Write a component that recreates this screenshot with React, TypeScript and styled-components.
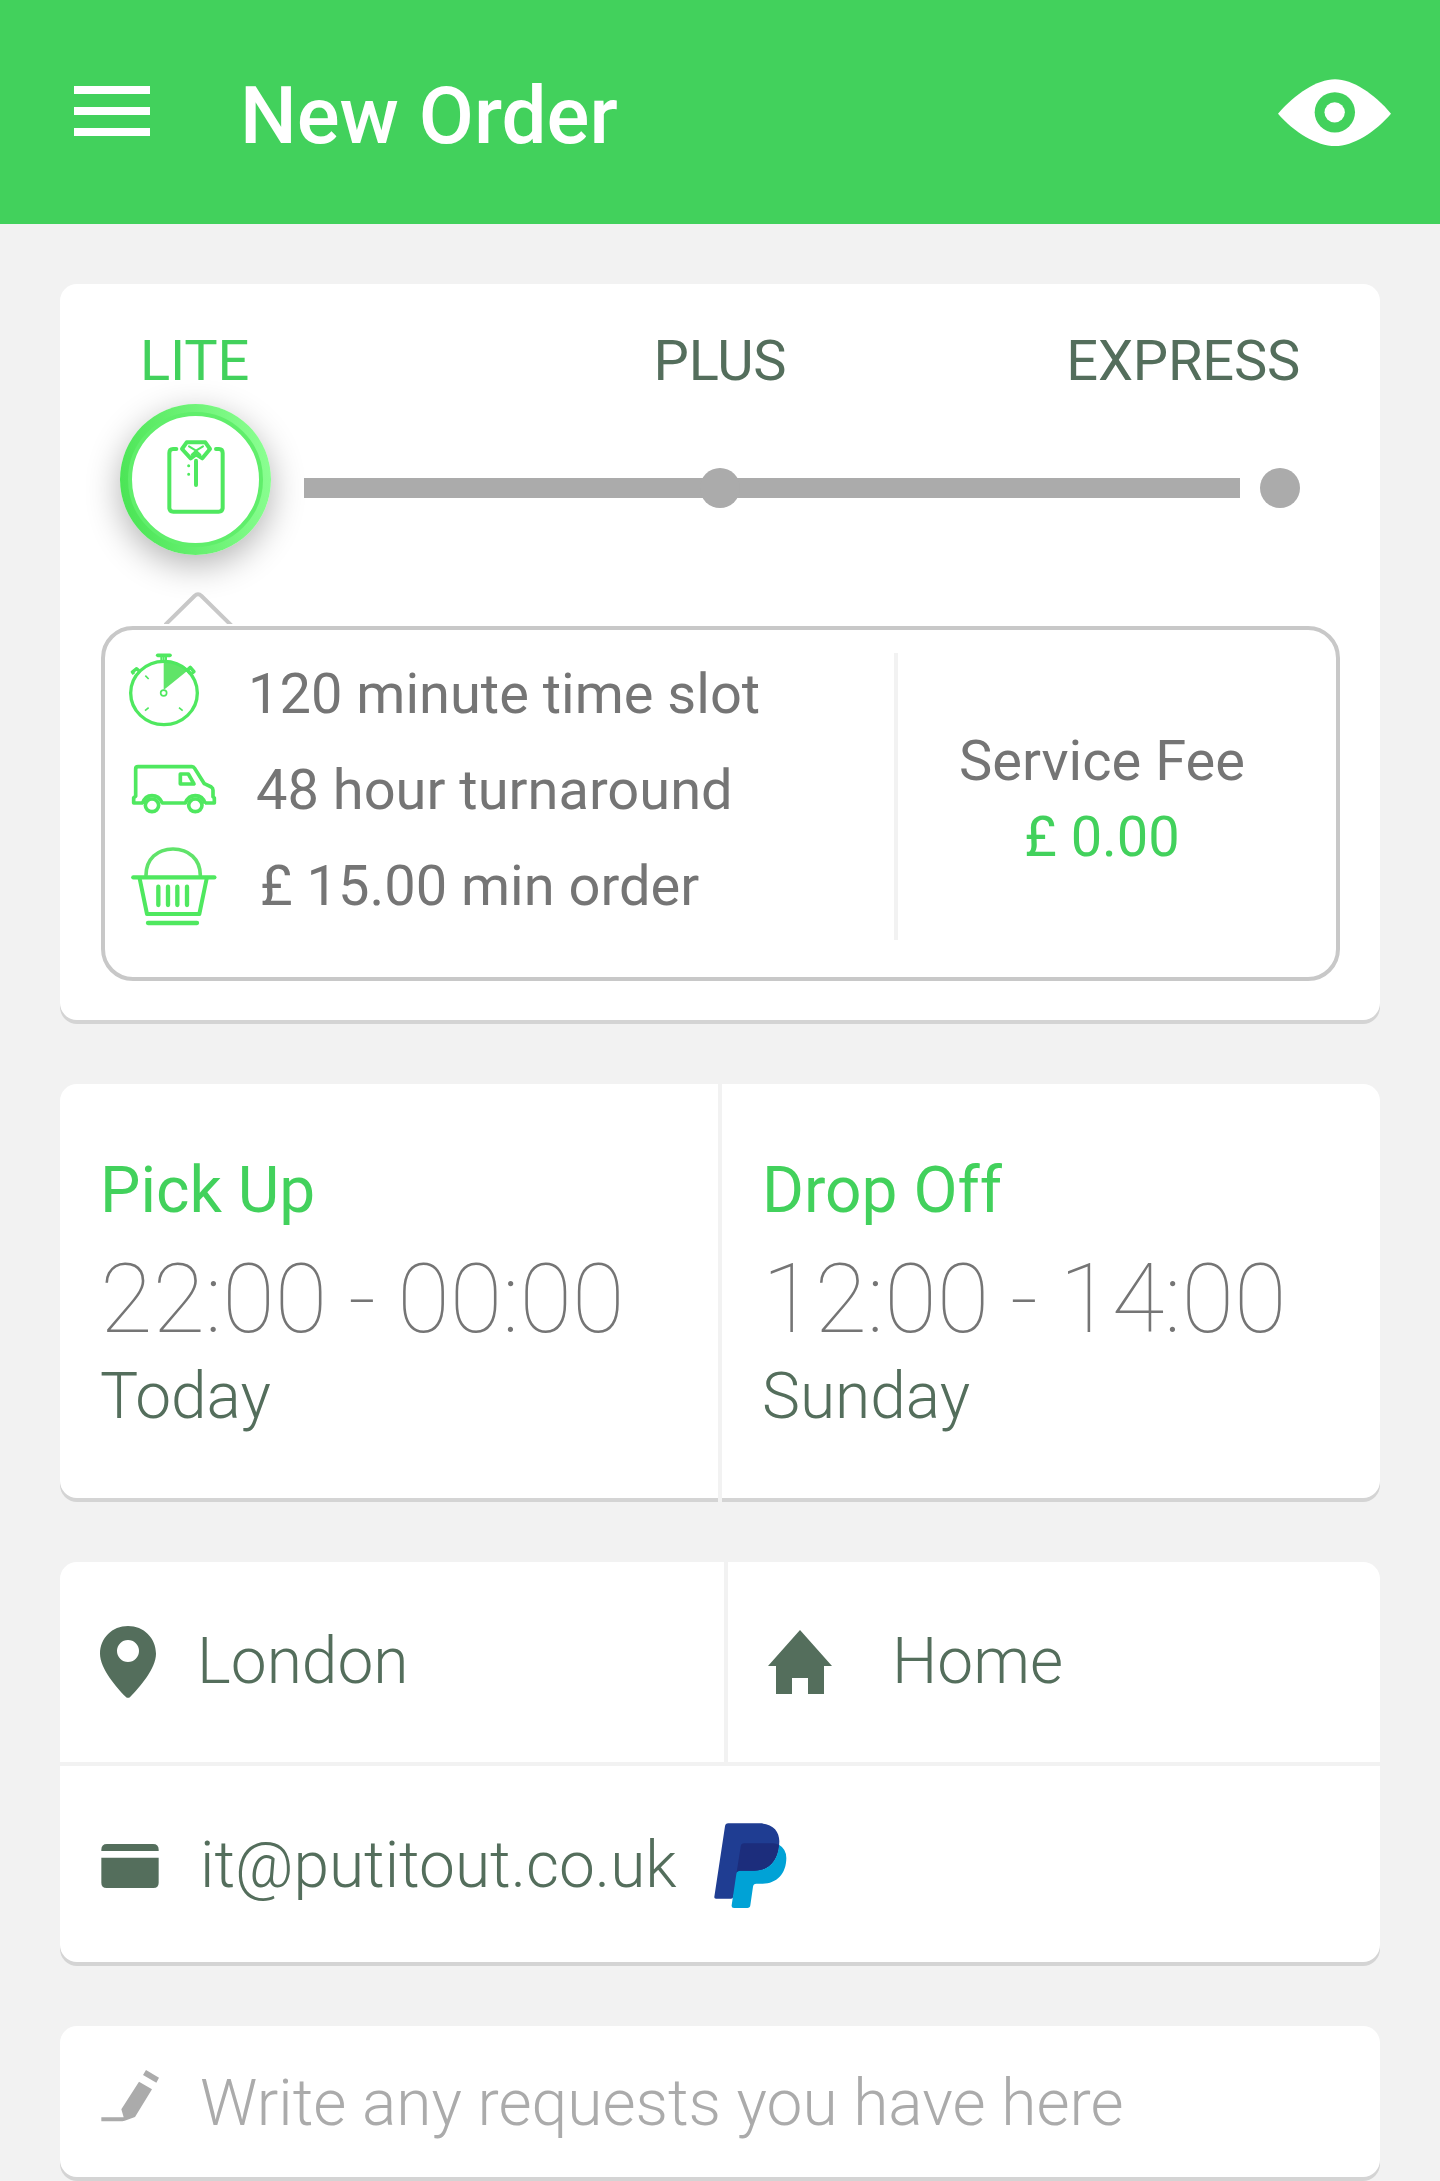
import React from "react";
import styled, { createGlobalStyle } from "styled-components";

const green = "#42d15c";
const iconGreen = "#4fe85f";
const forest = "#546e5c";
const grey = "#757575";
const silver = "#ababab";
const page = "#f2f2f2";

const GlobalStyle = createGlobalStyle`
  * { box-sizing: border-box; }
  body { margin: 0; background: ${page}; }
  svg { display: block; flex: none; }
`;

const Screen = styled.div`
  width: 1440px;
  height: 2181px;
  overflow: hidden;
  background: ${page};
  font-family: Roboto, "Noto Sans", sans-serif;
`;

const Header = styled.header`
  display: flex;
  align-items: flex-start;
  height: 224px;
  padding: 68px 49px 0 74px;
  background: ${green};
`;

const MenuButton = styled.div`
  display: flex;
  flex-direction: column;
  gap: 13px;
  width: 76px;
  margin-top: 18px;
`;

const MenuLine = styled.span`
  height: 8px;
  background: #fff;
`;

const Title = styled.h1`
  flex: 1;
  margin: 1px 0 0 90px;
  color: #fff;
  font-size: 80px;
  font-weight: 500;
  line-height: 94px;
`;

const EyeSlot = styled.div`
  margin-top: 11px;
`;

const Content = styled.main`
  display: flex;
  flex-direction: column;
  gap: 64px;
  padding: 60px 60px 0;
`;

const Card = styled.section<{ $height: number }>`
  height: ${(p) => p.$height}px;
  border-radius: 17px;
  background: #fff;
  box-shadow: 0 4px 0 #d4d4d4;
`;

const ServiceCard = styled(Card)`
  padding-top: 44px;
`;

const PlanLabels = styled.div`
  display: grid;
  grid-template-columns: 1fr auto 1fr;
  padding: 0 80px;
`;

const PlanLabel = styled.span<{ $active?: boolean; $align?: string }>`
  color: ${(p) => (p.$active ? green : forest)};
  font-size: 56px;
  line-height: 66px;
  letter-spacing: -0.2px;
  text-align: ${(p) => p.$align ?? "left"};
`;

const Slider = styled.div`
  display: flex;
  align-items: center;
  height: 151px;
  margin-top: 10px;
  padding: 0 80px 0 60px;
`;

const Knob = styled.div`
  display: flex;
  align-items: center;
  justify-content: center;
  flex: none;
  width: 151px;
  height: 151px;
  border-radius: 50%;
  background: linear-gradient(80deg, #4ae455 5%, #8bff92 95%);
  box-shadow: 0 10px 34px rgba(0, 0, 0, 0.3);
`;

const KnobFace = styled.div`
  display: flex;
  align-items: center;
  justify-content: center;
  width: 135px;
  height: 135px;
  padding-bottom: 6px;
  border: 4px solid #60ee6b;
  border-radius: 50%;
  background: #fff;
`;

const Track = styled.div`
  position: relative;
  flex: none;
  width: 936px;
  height: 20px;
  margin: 17px 20px 0 33px;
  background: ${silver};
`;

const Stop = styled.span`
  flex: none;
  width: 40px;
  height: 40px;
  margin-top: 17px;
  border-radius: 50%;
  background: ${silver};
`;

const MiddleStop = styled(Stop)`
  position: absolute;
  top: -10px;
  left: 396px;
  margin: 0;
`;

const CaretSlot = styled.div`
  height: 34px;
  margin: 37px 0 0 104px;
`;

const DetailBox = styled.div`
  display: flex;
  width: 1239px;
  height: 355px;
  margin-left: 41px;
  border: 4px solid #c8c8c8;
  border-radius: 32px;
`;

const FeatureList = styled.div`
  width: 789px;
  padding-top: 16px;
`;

const Feature = styled.div`
  display: flex;
  align-items: center;
  height: 96px;
`;

const FeatureIcon = styled.span<{ $width: number; $left: number; $lift: number }>`
  display: flex;
  flex: none;
  width: ${(p) => p.$width}px;
  padding-left: ${(p) => p.$left}px;
  padding-bottom: ${(p) => p.$lift}px;
`;

const FeatureText = styled.span`
  color: ${grey};
  font-size: 56px;
  line-height: 66px;
  white-space: nowrap;
`;

const FeeDivider = styled.div`
  width: 4px;
  height: 287px;
  margin-top: 23px;
  background: ${page};
`;

const Fee = styled.div`
  display: flex;
  flex-direction: column;
  align-items: center;
  gap: 10px;
  width: 408px;
  padding-top: 98px;
`;

const FeeText = styled.span<{ $accent?: boolean }>`
  color: ${(p) => (p.$accent ? green : grey)};
  font-size: 56px;
  line-height: 66px;
`;

const SplitCard = styled.section`
  display: flex;
  gap: 4px;
  height: 414px;
`;

const Slot = styled.div<{ $side: "left" | "right" }>`
  width: 658px;
  padding: 69px 0 0 40px;
  border-radius: ${(p) => (p.$side === "left" ? "17px 0 0 17px" : "0 17px 17px 0")};
  background: #fff;
  box-shadow: 0 4px 0 #d4d4d4;
`;

const SlotTitle = styled.div`
  color: ${green};
  font-size: 64px;
  line-height: 76px;
`;

const SlotTime = styled.div`
  margin-top: 14px;
  color: ${grey};
  font-size: 96px;
  font-weight: 100;
  line-height: 112px;
  white-space: nowrap;
  word-spacing: -2.2px;
`;

const SlotDay = styled.div`
  margin-top: 4px;
  color: ${forest};
  font-size: 64px;
  font-weight: 300;
  line-height: 76px;
`;

const PlaceRow = styled.div`
  display: flex;
  height: 204px;
  border-bottom: 4px solid ${page};
`;

const PlaceCell = styled.div<{ $width: number; $divided?: boolean }>`
  display: flex;
  align-items: center;
  width: ${(p) => p.$width}px;
  padding-left: 40px;
  border-right: ${(p) => (p.$divided ? `4px solid ${page}` : "none")};
`;

const DetailRow = styled.div<{ $height: number; $top: number }>`
  display: flex;
  align-items: center;
  height: ${(p) => p.$height}px;
  padding: ${(p) => p.$top}px 0 0 41px;
`;

const RowText = styled.span<{ $gap: number; $muted?: boolean }>`
  margin-left: ${(p) => p.$gap}px;
  color: ${(p) => (p.$muted ? silver : forest)};
  font-size: 64px;
  font-weight: 300;
  line-height: 76px;
  white-space: nowrap;
`;

const LogoSlot = styled.span`
  margin-left: 37px;
`;

const PencilSlot = styled.span`
  margin-top: -16px;
`;

const EyeIcon = () => (
  <svg width="113" height="68" viewBox="234 118 339 204">
    <path
      fill="#fff"
      d="M234 222C285 164 350 119 405 119C458 119 522 162 573 222C524 278 460 319 405 319C350 319 283 278 234 222Z"
    />
    <circle cx="404.500" cy="218" r="60.500" fill={green} />
    <circle cx="404" cy="218" r="30.500" fill="#fff" />
  </svg>
);

const ShirtIcon = () => (
  <svg width="60" height="76" viewBox="347 505 180 228" fill="none" stroke={iconGreen} strokeLinecap="round" strokeLinejoin="round">
    <path strokeWidth="12" d="M378 535H368Q357 535 357 547V711Q357 723 369 723H505Q517 723 517 711V547Q517 535 506 535H497" />
    <path strokeWidth="12" d="M409 515H465L479 535L456 563L437 551L421 563L395 535Z" />
    <path strokeWidth="6" d="M416 527L437 540L458 527M437 540L424 552M437 540L450 552" />
    <path strokeWidth="12" d="M437 570V643" />
    <path strokeWidth="9" d="M415 585V585.100M415 611V611.100" />
  </svg>
);

const CaretIcon = () => (
  <svg width="70" height="32" viewBox="0 0 70 32" fill="none" stroke="#c8c8c8" strokeWidth="4">
    <path d="M-1 35L30.500 4Q34 .5 37.500 4L69 35" />
  </svg>
);

const StopwatchIcon = () => (
  <svg width="72" height="76" viewBox="115 96 216 228" fill="none" stroke={iconGreen}>
    <path fill="#60e468" stroke="none" d="M222 122Q265 122 297 149L222 210Z" />
    <ellipse cx="223" cy="219" rx="100" ry="95" strokeWidth="10" />
    <path strokeWidth="11" strokeLinecap="round" d="M204 106H241" />
    <path strokeWidth="6" d="M215 108V123M229 108V123M222 108V123" />
    <path strokeWidth="10" strokeLinejoin="round" d="M133 162L128 156L141 146L148 152M293 150L302 142L313 155L306 160M292 149L302 160" />
    <ellipse cx="222" cy="219" rx="9" ry="8.500" strokeWidth="5" />
    <path strokeWidth="5" d="M167 167L177 177M166 272L177 263M268 263L279 272" />
  </svg>
);

const VanIcon = () => (
  <svg width="86" height="50" viewBox="123 431 258 150" fill="none" stroke={iconGreen} strokeWidth="11" strokeLinejoin="round">
    <path d="M159 548H131V532L137 528V446Q137 439 144 439H306Q311 439 314 444L343 490L364 500Q369 503 369 510V529L373 533V548H345" />
    <path d="M157 550Q165 526 186 526Q207 526 217 548H286Q295 526 316 526Q338 526 346 550" />
    <path d="M271 461H295L312 491H271Z" />
    <ellipse cx="186" cy="555" rx="20" ry="19" />
    <ellipse cx="316" cy="555" rx="20" ry="19" />
  </svg>
);

const BasketIcon = () => (
  <svg width="87" height="80" viewBox="120 681 261 240" fill="none" stroke={iconGreen} strokeLinecap="round">
    <path stroke="#60e36a" strokeWidth="11" d="M168 769C168 720 202 690 249 690C296 690 331 720 331 769" />
    <path strokeWidth="13" d="M130 775H373" />
    <path strokeWidth="12" strokeLinejoin="round" d="M149 779L171 885H328L350 779" />
    <path strokeWidth="13" d="M205 803V858M234 803V858M262 803V858M291 803V858" />
    <path strokeWidth="13" d="M174 912H321" />
  </svg>
);

const PinIcon = () => (
  <svg width="56" height="72" viewBox="150 228 168 216">
    <path
      fill={forest}
      fillRule="evenodd"
      d="M234 228C281 228 318 264 318 311C318 355 268 413 241 440Q234 447 227 440C200 413 150 355 150 311C150 264 187 228 234 228ZM234 270A33 33 0 1 0 234 336A33 33 0 1 0 234 270Z"
    />
  </svg>
);

const HomeIcon = () => (
  <svg width="64" height="64" viewBox="384 240 192 192">
    <path fill={forest} d="M480 240L576 348H552V432H504V384H456V432H408V348H384Z" />
  </svg>
);

const WalletIcon = () => (
  <svg width="58" height="44" viewBox="153 882 174 132" fill={forest}>
    <path d="M154 903V899Q154 882 171 882H309Q326 882 326 899V903Z" />
    <path d="M154 923H326V998Q326 1014 310 1014H170Q154 1014 154 998Z" />
  </svg>
);

const PaypalIcon = () => (
  <svg width="73" height="86" viewBox="224 819 219 258">
    <path
      fill="#1f3d92"
      d="M267 820H360C401 820 420 844 420 874C420 930 390 964 345 964H302L282 1040Q281 1046 275 1046H230Q224 1046 225 1040L257 829Q258 820 267 820Z"
    />
    <path
      fill="#00a2d6"
      d="M419 884Q441 897 441 924C441 971 412 1001 370 1001H351Q342 1001 341 1010L333 1066Q332 1074 324 1074H284Q276 1074 277 1066L291 972Q292 962 302 962H345C387 962 415 935 419 884Z"
    />
    <path
      fill="#1c2d7c"
      d="M315 880H402Q412 880 419 885C415 933 387 962 345 962H302Q296 962 292 967L304 890Q305 880 315 880Z"
    />
  </svg>
);

const PencilIcon = () => (
  <svg width="58" height="52" viewBox="153 389 174 156" fill={silver}>
    <path d="M154 531H221L214 507L267 424L306 447L255 530L224 541L217 543H154Z" />
    <path d="M288 389L327 412L319 427L279 404Z" />
  </svg>
);

export default function App() {
  return (
    <Screen>
      <GlobalStyle />
      <Header>
        <MenuButton>
          <MenuLine />
          <MenuLine />
          <MenuLine />
        </MenuButton>
        <Title>New Order</Title>
        <EyeSlot>
          <EyeIcon />
        </EyeSlot>
      </Header>
      <Content>
        <ServiceCard $height={736}>
          <PlanLabels>
            <PlanLabel $active>LITE</PlanLabel>
            <PlanLabel>PLUS</PlanLabel>
            <PlanLabel $align="right">EXPRESS</PlanLabel>
          </PlanLabels>
          <Slider>
            <Knob>
              <KnobFace>
                <ShirtIcon />
              </KnobFace>
            </Knob>
            <Track>
              <MiddleStop />
            </Track>
            <Stop />
          </Slider>
          <CaretSlot>
            <CaretIcon />
          </CaretSlot>
          <DetailBox>
            <FeatureList>
              <Feature>
                <FeatureIcon $width={143} $left={23} $lift={8}>
                  <StopwatchIcon />
                </FeatureIcon>
                <FeatureText>120 minute time slot</FeatureText>
              </Feature>
              <Feature>
                <FeatureIcon $width={151} $left={26} $lift={2}>
                  <VanIcon />
                </FeatureIcon>
                <FeatureText>48 hour turnaround</FeatureText>
              </Feature>
              <Feature>
                <FeatureIcon $width={155} $left={25} $lift={0}>
                  <BasketIcon />
                </FeatureIcon>
                <FeatureText>£ 15.00 min order</FeatureText>
              </Feature>
            </FeatureList>
            <FeeDivider />
            <Fee>
              <FeeText>Service Fee</FeeText>
              <FeeText $accent>£ 0.00</FeeText>
            </Fee>
          </DetailBox>
        </ServiceCard>

        <SplitCard>
          <Slot $side="left">
            <SlotTitle>Pick Up</SlotTitle>
            <SlotTime>22:00 - 00:00</SlotTime>
            <SlotDay>Today</SlotDay>
          </Slot>
          <Slot $side="right">
            <SlotTitle>Drop Off</SlotTitle>
            <SlotTime>12:00 - 14:00</SlotTime>
            <SlotDay>Sunday</SlotDay>
          </Slot>
        </SplitCard>

        <Card $height={400}>
          <PlaceRow>
            <PlaceCell $width={668} $divided>
              <PinIcon />
              <RowText $gap={41}>London</RowText>
            </PlaceCell>
            <PlaceCell $width={652}>
              <HomeIcon />
              <RowText $gap={60}>Home</RowText>
            </PlaceCell>
          </PlaceRow>
          <DetailRow $height={196} $top={4}>
            <WalletIcon />
            <RowText $gap={41}>it@putitout.co.uk</RowText>
            <LogoSlot>
              <PaypalIcon />
            </LogoSlot>
          </DetailRow>
        </Card>

        <Card $height={151}>
          <DetailRow $height={151} $top={4}>
            <PencilSlot>
              <PencilIcon />
            </PencilSlot>
            <RowText $gap={41} $muted>
              Write any requests you have here
            </RowText>
          </DetailRow>
        </Card>
      </Content>
    </Screen>
  );
}
